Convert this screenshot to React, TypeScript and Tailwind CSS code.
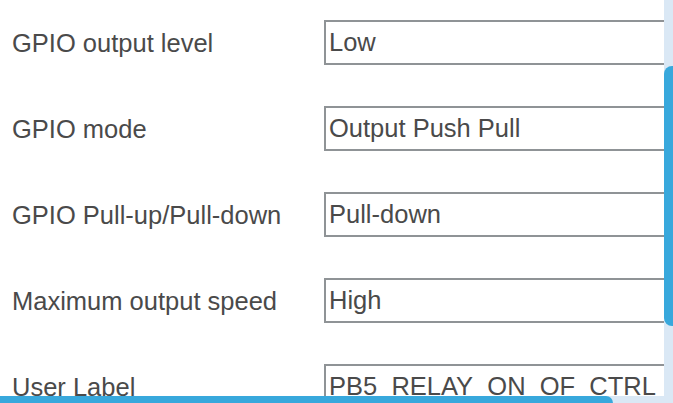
import React from 'react';

interface FieldRow {
    label: string;
    value: string;
}

const rows: FieldRow[] = [
    { label: 'GPIO output level', value: 'Low' },
    { label: 'GPIO mode', value: 'Output Push Pull' },
    { label: 'GPIO Pull-up/Pull-down', value: 'Pull-down' },
    { label: 'Maximum output speed', value: 'High' },
    { label: 'User Label', value: 'PB5_RELAY_ON_OF_CTRL' },
];

const App: React.FC = () => {
    return (
        <div className="relative w-[673px] h-[403px] overflow-hidden bg-white" style={{ fontFamily: '"Liberation Sans", Arial, sans-serif' }}>
            {/* form rows */}
            <div className="flex flex-col gap-[41px] pt-[20px] pl-[12px]">
                {rows.map((row) => (
                    <div key={row.label} className="flex items-center h-[45px] shrink-0">
                        <div className="w-[312px] shrink-0 text-[25.5px] text-[#4a4a4a] pt-[2px]">{row.label}</div>
                        <div className="w-[380px] h-[45px] shrink-0 border-2 border-[#8f9396] flex items-center pl-[3px] text-[25.5px] text-[#4a4a4a] whitespace-nowrap">
                            {row.value}
                        </div>
                    </div>
                ))}
            </div>

            {/* vertical scrollbar */}
            <div className="absolute right-0 top-0 w-[9px] h-[396px] bg-[#dae8f5]">
                <div className="mt-[66px] h-[260px] w-full bg-[#38a8dc] rounded-l-[8px]"></div>
            </div>

            {/* horizontal scrollbar */}
            <div className="absolute left-0 bottom-0 w-full h-[7px] bg-[#dae8f5]">
                <div className="h-full w-[613px] bg-[#38a8dc] rounded-tr-[8px]"></div>
            </div>
        </div>
    );
};

export default App;
